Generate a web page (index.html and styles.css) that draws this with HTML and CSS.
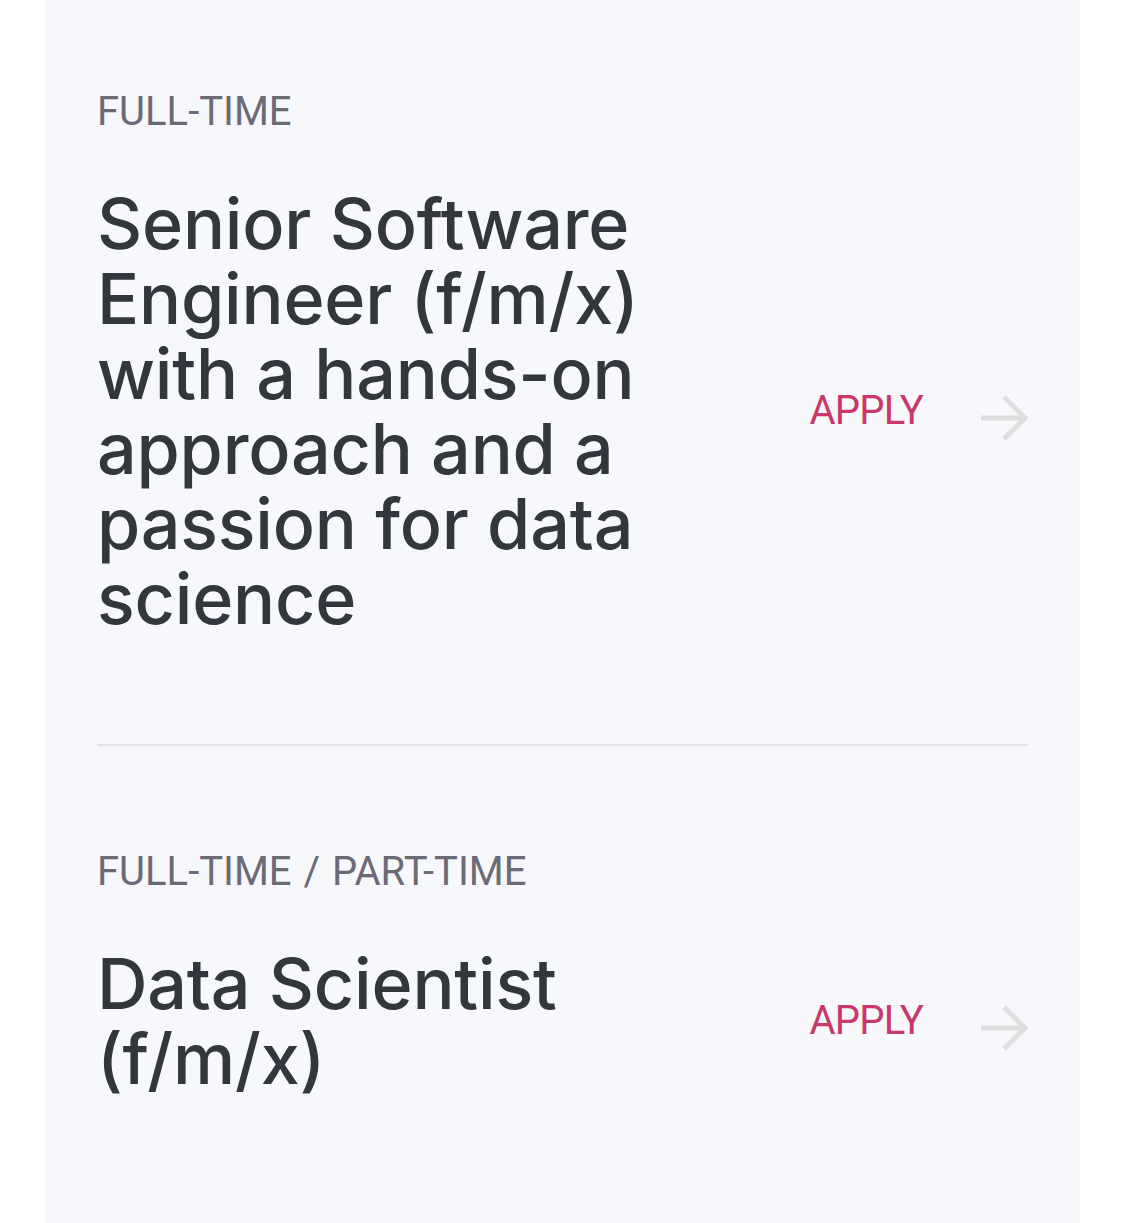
FILE: index.html
```html
<!DOCTYPE html>
<html lang="en">
<head>
  <meta charset="UTF-8">
  <meta name="viewport" content="width=device-width, initial-scale=1.0">
  <title>Open positions</title>
  <link rel="stylesheet" href="styles.css">
</head>
<body>
  <main class="careers">
    <article class="job">
      <p class="job-type">FULL-TIME</p>
      <div class="job-row">
        <h2 class="job-title">Senior Software Engineer (f/m/x) with a hands-on approach and a passion for data science</h2>
        <a class="job-apply" href="#">
          <span>APPLY</span>
          <svg class="arrow" width="48" height="48" viewBox="0 0 48 48" aria-hidden="true">
            <path d="M1 24H45M24 3L45 24L24 45" fill="none" stroke="currentColor" stroke-width="5"/>
          </svg>
        </a>
      </div>
    </article>
    <article class="job">
      <p class="job-type">FULL-TIME / PART-TIME</p>
      <div class="job-row">
        <h2 class="job-title">Data Scientist (f/m/x)</h2>
        <a class="job-apply" href="#">
          <span>APPLY</span>
          <svg class="arrow" width="48" height="48" viewBox="0 0 48 48" aria-hidden="true">
            <path d="M1 24H45M24 3L45 24L24 45" fill="none" stroke="currentColor" stroke-width="5"/>
          </svg>
        </a>
      </div>
    </article>
  </main>
</body>
</html>
```

FILE: styles.css
```css
body {
  margin: 0;
  background-color: #fff;
  font-family: 'Roboto', 'Liberation Sans', sans-serif;
}
.careers {
  box-sizing: border-box;
  margin: 0 45px;
  min-height: 100vh;
  padding: 88px 52px 0;
  background-color: #f7f8fc;
}
.job {
  padding-bottom: 108px;
  border-bottom: 2px solid #e1e3e8;
}
.job + .job {
  padding-top: 102px;
  padding-bottom: 100px;
  border-bottom: none;
}
.job-type {
  margin: 0;
  font-size: 40px;
  line-height: 48px;
  color: #6c6a74;
  word-spacing: 2px;
}
.job-row {
  display: flex;
  align-items: center;
  justify-content: space-between;
  margin-top: 50px;
}
.job-title {
  flex: 0 1 640px;
  margin: 0;
  font-family: 'Inter', 'Open Sans', sans-serif;
  font-size: 70px;
  font-weight: 500;
  line-height: 75px;
  letter-spacing: -0.2px;
  color: #33373d;
}
.job-apply {
  display: flex;
  align-items: center;
  gap: 57px;
  font-size: 40px;
  line-height: 48px;
  letter-spacing: -0.8px;
  color: #c9386b;
  text-decoration: none;
}
.arrow {
  margin-top: 14px;
  color: #dedede;
}
```
